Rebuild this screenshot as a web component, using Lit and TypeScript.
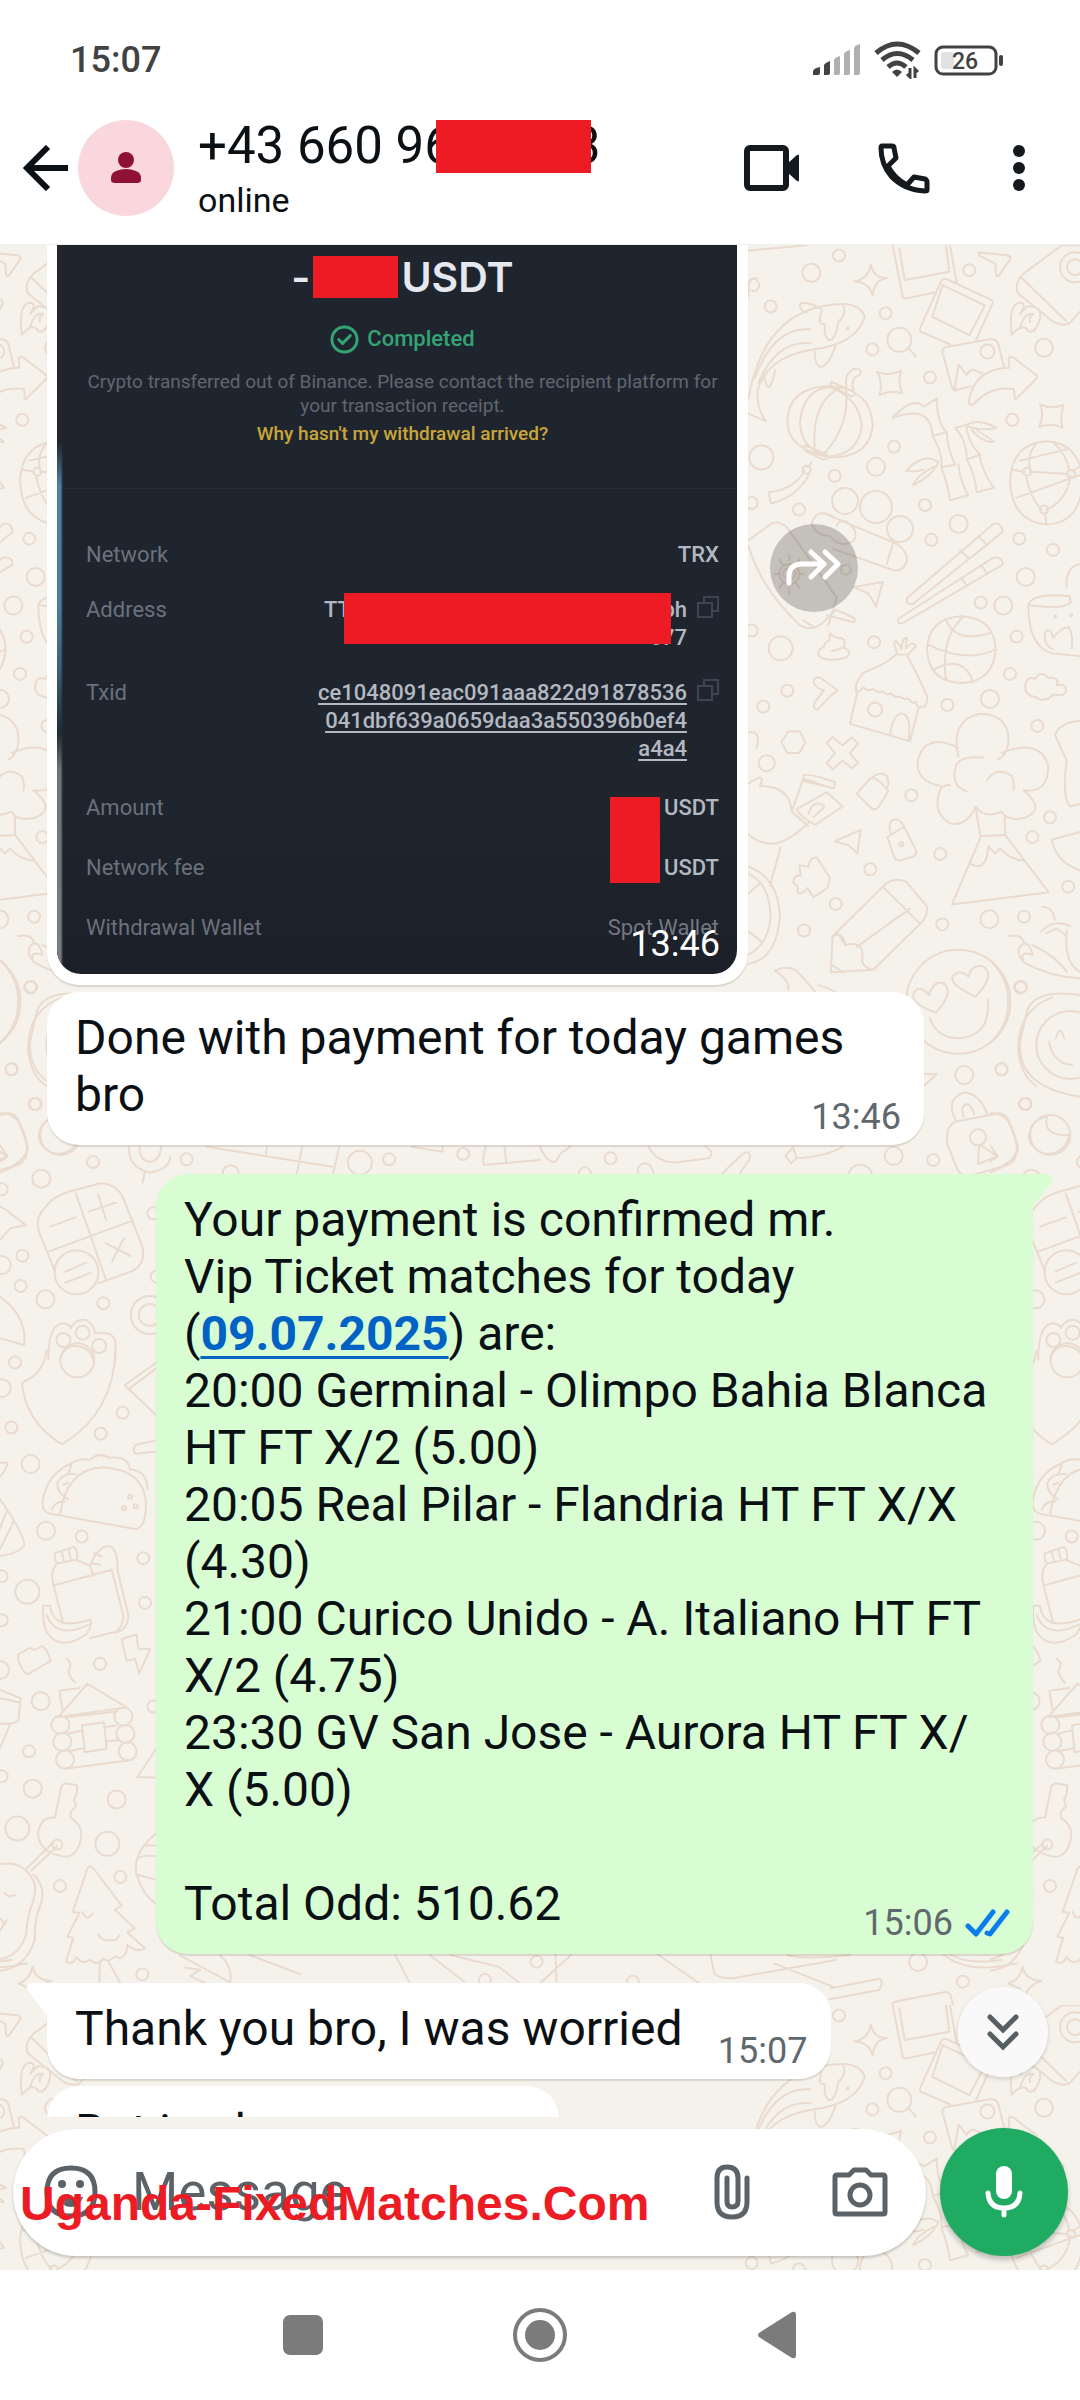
import { LitElement, html, svg, css, nothing } from "lit";
import { customElement, property } from "lit/decorators.js";

type Dot = [number, number, number];

/** One sheet of doodles: origin on the wallpaper, drawing units per pixel, outlines and bubbles. */
interface Sheet {
  x: number;
  y: number;
  kx: number;
  ky: number;
  lines: string;
  dots: Dot[];
}

const SHEETS: Sheet[] = [
  {
    x: 700, y: -15, kx: 3, ky: 1.96,
    lines: `
      M512 67Q520 95 560 94Q522 98 518 128Q508 103 464 101Q508 95 512 67Z
      M531 278Q565 288 603 276Q592 300 607 320Q570 312 538 324Q550 300 531 278Z
      M1020 342Q1055 352 1091 343Q1078 367 1088 387Q1052 378 1017 386Q1034 364 1020 342Z
      M578 30L608 130Q610 136 620 134L708 122M750 30L770 104M598 36L614 98L748 82L738 30
      M725 98Q735 94 745 98L872 136Q882 140 876 146L828 216M750 224L664 200Q656 196 662 190L725 98M728 108L855 148L808 206L697 170Z
      M735 230L870 214Q890 213 895 224L912 268M735 230Q724 234 728 242L755 306Q760 316 768 314L812 306M764 310L776 264L800 284Q810 272 822 274L850 282
      M806 338Q820 272 928 270L926 252Q930 246 940 250L1008 284Q1014 288 1008 292L950 330Q942 334 944 326L942 312Q870 305 820 342Q808 344 806 338Z
      M836 44L925 50Q934 52 930 58L896 90Q890 92 888 86L886 66L838 50Q834 46 836 44Z
      M1140 30L1085 30L970 86Q940 105 955 125L1060 180Q1090 190 1110 182L1140 160M962 92L1098 178
      M935 205Q925 150 955 143Q985 140 960 165Q985 145 990 150Q1025 150 1020 172Q1010 202 985 199Q970 180 935 205M960 190Q975 160 1000 165Q985 170 990 180
      M146 330Q190 160 400 146Q480 140 494 170Q470 225 330 235Q200 250 172 315Q170 350 198 375L146 360
      M300 145Q320 138 365 155M300 145Q298 158 320 162M430 150Q440 165 415 180Q405 220 385 215Q370 205 375 185Q350 185 365 160
      M344 238Q345 270 365 268Q390 262 408 224M330 195Q220 190 165 290M333 222Q230 215 175 300M195 290Q198 312 210 306Q220 295 225 275
      M626 232L648 248
      M262 375Q265 308 390 306Q515 312 518 384Q510 446 390 446Q262 430 262 375ZM300 375Q310 312 390 308Q480 330 485 385Q475 440 385 444Q300 430 300 375
      M425 308Q330 335 345 435M438 310Q450 385 370 440M395 298L460 316Q470 326 455 326L400 308Q388 302 395 298
      M315 422L380 440Q388 450 370 450L318 434Q308 428 315 422M440 308Q430 285 460 272Q490 272 480 284Q450 290 460 312
      M335 455L324 466M314 472Q280 510 206 514L212 536Q290 525 328 478
      M577 368Q640 325 672 346L710 330Q712 380 740 396L698 404Q695 370 662 362Q640 355 577 368ZM698 404Q730 440 724 465L766 460Q742 430 740 396
      M724 466Q745 500 750 530L804 520Q780 490 775 460M618 472Q670 435 715 455Q700 480 640 500Q650 480 710 462M618 472Q650 475 670 470
      M765 388L798 382Q805 420 840 440L800 450Q800 410 765 388ZM838 440Q850 480 882 505L830 514Q825 480 802 452
      M798 382Q840 368 888 388Q840 395 800 384M815 392Q850 418 882 415Q850 400 830 392
      M930 492Q935 418 1040 414Q1140 418 1150 492Q1140 576 1040 577Q935 572 930 492Z
      M990 474L1105 478M990 470Q980 440 1010 418M1108 472Q1100 440 1060 416M978 482Q990 525 1025 548M1112 482Q1100 530 1040 548M948 525L1150 478M960 452L1100 430M938 470L972 474M1035 555L1040 577M1120 472L1145 460
      M395 560Q350 545 335 575Q345 598 390 600Q420 625 460 610Q480 590 440 572Q420 565 410 580M370 555L590 615Q625 630 620 650Q610 670 580 667L400 625M560 655L580 612
      M146 608L215 575Q235 570 260 582L410 720L385 775M146 620Q180 700 300 775M300 775Q340 790 375 765L408 745M310 765L345 780M410 745L462 760Q470 770 455 768L380 755
      M268 636V648M268 700V712M225 674H240M296 674H312M238 646L248 656M298 646L288 656M238 702L248 692M298 702L288 692
      M620 722L880 576Q905 572 908 592L640 732Q620 736 620 722ZM595 762L880 642Q908 640 908 656L610 770Q592 774 595 762ZM780 628L808 644M835 600L862 618M785 682L800 698M845 658L862 674
      M460 700L548 690L528 738L505 712Z
      M681 822Q685 760 784 757Q882 760 887 822Q880 885 784 888Q685 885 681 822ZM740 766Q760 800 830 796Q870 792 874 788M682 812Q800 850 886 822M738 882Q720 800 790 758M820 886Q790 830 700 862
      M390 790Q400 800 425 800Q440 806 430 818Q450 822 446 834Q430 844 380 842Q350 838 356 826Q362 818 372 818Q370 808 388 805ZM395 825Q415 822 430 818
      M470 905Q460 890 490 868Q560 850 588 832L620 832Q660 880 682 915Q682 935 665 935Q650 938 648 925Q635 930 625 918Q610 922 600 914Q585 918 572 908Q560 914 548 904Q530 908 520 900Q500 905 490 896Q480 905 470 905
      M472 905L450 968L630 1002L656 936M570 990Q580 945 610 948Q635 955 626 1000M592 832L582 808Q590 800 604 822Q608 796 620 800L618 820Q635 805 648 815L622 834
      M975 895Q980 872 1005 880Q1020 862 1045 878Q1080 876 1070 892Q1100 888 1098 905Q1090 916 1060 910Q1035 928 1008 916Q975 912 975 895Z
      M265 983L300 983L316 1004L298 1025L262 1025L244 1004Z
      M380 1005L398 994L428 1010L455 994L474 1006L450 1026L475 1045L455 1055L428 1040L398 1057L380 1045L405 1026Z
      M340 885Q350 870 370 882L412 902L388 916L352 940Q336 938 344 926L372 902Q350 900 340 885Z
      M775 1032Q750 960 840 948Q930 950 925 1005Q920 1030 895 1038M905 1025Q1020 995 1045 1050Q1045 1105 970 1098Q1040 1135 975 1152Q920 1160 905 1140Q850 1155 828 1130Q800 1170 750 1163Q690 1140 725 1090Q640 1080 655 1035Q680 985 775 1015
      M730 1092Q740 1086 750 1088M800 1100Q750 1090 768 1050Q780 1030 850 1034M862 1078Q890 1050 935 1070Q945 1085 940 1098
      M826 1130L842 1190L756 1322L1046 1298L916 1186L914 1150M842 1188L916 1186M810 1242Q860 1260 865 1208L885 1222L900 1212Q930 1235 972 1236
      M470 1105L510 1075Q530 1070 565 1100L535 1132Q525 1138 515 1134ZM515 1074Q540 1060 560 1070Q572 1085 558 1095
      M562 1190L612 1170L648 1215Q650 1225 640 1228L600 1236Q585 1236 582 1228ZM572 1186Q560 1155 590 1155Q610 1160 618 1178
      M404 1198L482 1176L472 1222L446 1206Z
      M280 1280Q282 1262 302 1266L298 1245L325 1248Q330 1228 350 1230L390 1270L382 1290L340 1308L322 1290Q305 1305 292 1298Q298 1284 280 1280Z
      M392 1455L398 1384L560 1280Q590 1268 620 1278L680 1325Q686 1345 660 1360L520 1450ZM398 1384Q430 1375 436 1402Q490 1392 488 1425Q480 1445 522 1450M550 1288L658 1358M410 1375L436 1402M470 1405L630 1330M394 1440L430 1455
      M146 985Q185 980 170 1015M146 1085Q200 1060 180 1090Q270 1090 275 1140L310 1075L385 1092M310 1070Q315 1062 405 1082L402 1094L312 1080M146 1185Q220 1230 325 1162M275 1140L325 1168
      M290 1135L380 1102L428 1130L345 1166Q300 1150 290 1135M325 1145Q340 1115 370 1128Q380 1130 340 1150M242 1210L210 1285
      M146 1262Q208 1280 212 1345Q205 1400 146 1420M146 1248Q235 1270 240 1345Q230 1430 146 1438M146 1375L185 1395M146 1300L178 1282
      M225 1452Q260 1440 290 1452Q330 1480 345 1493M225 1452Q270 1470 265 1490M355 1480Q380 1484 405 1493
      M985 735Q985 820 1060 830L1140 835M985 735Q1000 710 1110 718L1112 730Q1090 745 985 735M1035 790Q1050 775 1060 800Q1080 780 1105 778Q1120 790 1115 820M1035 790Q1030 815 1060 822M1100 700Q1095 660 1140 655
      M1065 990Q1080 965 1140 962M1065 990L1100 1040Q1085 1110 1110 1130L1140 1125M1140 1180L1055 1195Q1070 1240 1140 1255
      M146 40L320 30M146 130Q140 90 170 95`,
    dots: [
      [417, 50, 6], [334, 84, 9], [212, 150, 6], [557, 163, 6], [517, 234, 6], [160, 108, 6], [598, 215, 12], [690, 289, 6], [808, 79, 6],
      [862, 238, 7], [1032, 231, 9], [937, 372, 6], [582, 425, 6], [528, 464, 9], [404, 482, 6], [184, 446, 12], [320, 470, 4], [297, 548, 6],
      [435, 531, 13], [528, 543, 16], [600, 586, 13], [675, 539, 6], [694, 607, 6], [776, 576, 9], [958, 605, 6], [1059, 627, 6], [977, 680, 9],
      [268, 674, 10], [268, 674, 6], [438, 666, 5], [910, 736, 9], [842, 730, 6], [950, 797, 6], [930, 870, 6], [870, 919, 9], [742, 931, 6],
      [522, 808, 6], [242, 820, 12], [262, 903, 6], [190, 934, 6], [155, 535, 6], [155, 785, 6], [525, 940, 7], [1012, 972, 6], [634, 1108, 6],
      [1050, 1151, 6], [997, 1190, 6], [721, 1223, 6], [511, 1253, 6], [1105, 1287, 6], [604, 1204, 2], [407, 1321, 6], [312, 1373, 6],
      [727, 1361, 6], [868, 1351, 9], [972, 1346, 6], [443, 193, 1], [200, 1045, 8], [1125, 73, 15], [1125, 73, 8], [982, 474, 4], [1113, 478, 4], [1032, 548, 4],
      [1066, 757, 1], [1114, 755, 1], [962, 1484, 6],
    ],
  },
  {
    x: 540, y: 655, kx: 2.904, ky: 3,
    lines: `
      M1150 338Q1075 310 1085 280Q1100 250 1130 285Q1140 245 1170 248Q1205 275 1150 338ZM1265 290Q1190 255 1198 230Q1215 205 1245 230Q1250 195 1285 198Q1325 225 1265 290Z
      M1133 355Q1150 415 1220 415Q1310 405 1300 298
      M1568 285Q1440 265 1415 330L1395 420Q1380 560 1568 590M1478 425Q1490 490 1545 495M1498 415Q1510 370 1522 415
      M1205 665L1330 640Q1350 640 1360 660L1388 740Q1385 775 1340 800L1240 830Q1215 825 1205 790L1182 730Q1178 680 1205 665Z
      M1208 662Q1175 600 1230 577Q1275 580 1298 640M1230 650Q1220 615 1240 612Q1255 620 1262 642M1280 735L1328 770L1272 792L1275 735
      M1472 650Q1460 710 1538 705Q1520 770 1460 760Q1400 730 1430 675Q1445 655 1472 650Z
      M1360 108Q1400 100 1405 130Q1375 150 1405 187Q1390 150 1430 165Q1425 130 1405 130M1405 187Q1480 230 1568 235M1430 135Q1500 170 1530 215M1455 95Q1490 55 1540 78M1470 100L1500 85L1525 105M1530 90Q1520 190 1568 215M1458 20Q1490 20 1495 60
      M1115 522L1152 522L1118 555M0 740Q20 790 45 785L60 760L88 740M315 740Q340 790 400 787L490 775Q510 755 480 740M712 768L735 742L745 775L730 790ZM745 775Q830 770 880 740
      M530 820L585 765Q610 745 610 775L580 820M285 820Q280 790 310 790Q325 795 330 820`,
    dots: [
      [1215, 305, 52], [1540, 435, 34], [1272, 712, 8], [1232, 525, 9], [1340, 508, 6], [1408, 612, 6], [1142, 780, 6], [1027, 768, 9], [205, 775, 6], [930, 830, 12], [1395, 262, 6], [130, 820, 6],
    ],
  },
  {
    x: 0, y: 715, kx: 2.904, ky: 3,
    lines: `
      M125 750Q150 710 200 695L290 670Q340 670 360 720L410 850Q430 910 380 935L285 970M160 935L115 820Q100 780 125 750M220 700L308 960M140 875L385 782M258 755L336 728M285 702L308 780M145 800L220 772M308 850L380 888M360 835L325 905M190 935L250 908M190 968L264 938
      M140 1200Q140 1090 185 1090Q205 1095 205 1105Q220 1075 250 1080Q275 1095 275 1120Q340 1110 335 1160L335 1200M175 1200Q185 1155 225 1158Q265 1165 270 1200
      M0 740L20 752L75 795L30 805L0 840M180 112Q80 150 82 270Q90 350 135 378M0 0Q60 60 52 140Q50 200 0 248M0 460Q50 455 70 520Q90 590 60 610L0 638M0 555L22 590L0 605M0 1010Q80 1070 70 1155L0 1135
      M375 560Q370 620 435 638Q490 630 495 590M405 560Q405 605 440 605Q465 600 468 560M420 640L414 668M600 560L965 620M878 560L862 640M985 560L968 640M775 560L772 585M1195 560L1285 575V560M1410 560Q1400 600 1405 615L1568 600M1465 560L1470 608`,
    dots: [
      [90, 80, 6], [34, 328, 6], [103, 432, 6], [120, 656, 9], [270, 606, 6], [542, 598, 6], [1045, 608, 12], [1130, 598, 6], [1345, 582, 6], [60, 978, 6], [132, 1018, 9], [300, 1030, 6],
      [65, 887, 6], [5, 688, 6], [5, 915, 9], [184, 1140, 7], [240, 1118, 7], [288, 1158, 7], [222, 937, 22], [435, 1065, 19], [435, 1065, 11], [175, 525, 20], [670, 640, 8],
      [445, 760, 6], [455, 950, 6],
    ],
  },
  {
    x: 0, y: 1105, kx: 3, ky: 2.412,
    lines: `
      M140 0Q130 60 66 78Q75 170 180 225Q187 228 195 223Q340 150 347 0M470 30L374 85L470 158M385 95L468 45M470 218L410 228Q395 235 405 250L470 245
      M150 395Q125 390 128 365Q140 300 210 275Q240 260 270 265Q295 245 330 260Q385 255 390 288Q440 290 443 335M180 398Q200 285 310 283Q440 290 438 380Q435 430 405 432L150 395M205 360Q170 345 172 320Q190 295 230 300M155 385Q165 365 195 365M215 275L205 300M190 325L205 320
      M165 490L222 475Q232 480 232 505L172 515Q160 505 165 490ZM172 515Q150 530 160 565L190 660M160 568L335 530L370 640Q370 670 345 680L270 695M232 508L270 520L280 545M270 520Q300 465 335 475Q355 490 352 530L385 640Q385 675 345 682M283 490L305 498M275 515L300 518M185 485L192 508M205 482L212 504
      M130 617L150 617Q160 680 270 650Q280 660 260 685Q180 730 140 680Q125 650 130 617ZM140 640Q170 700 268 662
      M55 735L90 718Q100 730 125 714Q140 718 152 750L85 782Q70 780 55 750ZM365 697L410 686L414 720L450 722L418 780L405 745L380 750ZM200 745Q220 755 205 775Q210 790 224 802
      M175 885L262 805L380 862ZM178 822L238 815M178 822L188 870M246 905L312 898L320 962L254 970ZM205 925L246 918M205 968L254 960M195 1010L385 990M312 910L350 905M318 945L358 940M205 885L350 872
      M0 820L62 840L55 895Q30 905 0 900M30 903L0 960M0 840L60 850M0 360Q70 440 73 470Q60 490 0 497M20 390L0 430M40 415L0 480M0 272L22 272Q20 290 0 305M470 960L412 1030L470 1032
      M195 1045L232 1050L230 1070L222 1085L228 1100L212 1115L212 1128Q245 1145 244 1170Q235 1225 190 1222Q110 1210 115 1160Q125 1125 165 1128L185 1050ZM172 1196L95 1255M160 1188L80 1250
      M0 1240Q70 1230 100 1280Q115 1300 90 1350Q80 1380 78 1410Q60 1460 0 1470M100 1265Q135 1290 125 1330Q100 1380 105 1420Q80 1490 0 1497M15 1310Q25 1322 45 1315M0 1370L15 1385M20 1375L0 1400
      M270 1245Q260 1250 258 1262L218 1355L238 1358L202 1415L220 1418L198 1475Q215 1485 230 1465Q250 1485 270 1470Q290 1488 310 1468Q325 1480 345 1462Q370 1475 380 1448L382 1435Q410 1455 435 1443L382 1405L405 1395L345 1350L365 1340L280 1250ZM248 1355Q258 1380 277 1360M295 1410Q310 1430 330 1422Q345 1430 358 1412M300 1475L298 1525M325 1475L360 1525
      M98 1487Q105 1520 155 1522Q115 1530 105 1560M98 1487Q90 1520 55 1528L90 1540M470 1165Q400 1210 408 1260Q430 1320 470 1335M415 1225Q440 1215 470 1222M408 1265L470 1278M435 1195L465 1195
      M540 1460L690 1525M555 1490L600 1495L570 1510L625 1530M660 1460Q700 1490 690 1525M750 1460L900 1505`,
    dots: [
      [45, 30, 6], [5, 92, 9], [34, 187, 6], [92, 275, 9], [368, 151, 6], [302, 202, 6], [138, 436, 9], [245, 450, 6], [430, 502, 6], [82, 583, 12], [435, 610, 6], [5, 546, 6], [5, 652, 6],
      [0, 772, 9], [300, 757, 6], [122, 847, 9], [87, 968, 6], [98, 1058, 9], [350, 1084, 9], [52, 1154, 12], [322, 1191, 12], [180, 1293, 6], [361, 1271, 6], [427, 1506, 6], [460, 860, 6],
      [5, 1028, 6], [232, 25, 17], [390, 354, 2], [372, 382, 2], [407, 377, 2], [181, 904, 9], [187, 945, 9], [195, 988, 9], [370, 884, 9], [376, 926, 9], [383, 968, 9], [172, 1193, 5],
    ],
  },
  {
    x: 540, y: 1555, kx: 2.904, ky: 3,
    lines: `
      M495 465L505 515Q510 535 560 535L860 480M680 490L850 560M720 465Q760 480 900 465M845 565L985 536Q1000 545 985 570L840 598M0 550L90 465M45 462L48 545M340 462L460 548M1170 462Q1240 525 1385 490M1190 462Q1240 495 1340 480M1030 620Q1015 608 1040 603L1180 575Q1195 580 1200 620
      M-320 465L-220 545M-260 465L-120 500L-60 548M-420 465L-380 545`,
    dots: [[1098, 486, 9], [1228, 545, 6], [270, 545, 6], [-160, 540, 6], [-10, 485, 6]],
  },
];

const sheet = (s: Sheet) => svg`
  <g transform="translate(${s.x} ${s.y}) scale(${1 / s.kx} ${1 / s.ky})">
    <path d=${s.lines}></path>
    ${s.dots.map(([x, y, r]) => svg`<ellipse cx=${x} cy=${y} rx=${r * s.kx} ry=${r * s.ky}></ellipse>`)}
  </g>`;

@customElement("chat-wallpaper")
export class ChatWallpaper extends LitElement {
  static styles = css`
    :host { display: block; background: #f5f2eb; }
    svg { display: block; width: 100%; height: 100%; }
    path, ellipse { fill: none; stroke: #e9dbcd; stroke-width: 2px; vector-effect: non-scaling-stroke; stroke-linejoin: round; stroke-linecap: round; }
  `;

  render() {
    return html`
      <svg aria-hidden="true">
        <defs>
          <pattern id="doodles" width="990" height="1760" patternUnits="userSpaceOnUse">
            <g id="sheets">${SHEETS.map(sheet)}</g>
            <use href="#sheets" x="-990"></use>
          </pattern>
        </defs>
        <rect width="100%" height="100%" fill="url(#doodles)"></rect>
      </svg>`;
  }
}

@customElement("chat-bubble")
export class ChatBubble extends LitElement {
  @property({ type: Boolean, reflect: true }) outgoing = false;
  @property({ type: Boolean, reflect: true }) tail = false;
  @property() time = "";

  static styles = css`
    :host { display: block; position: relative; box-sizing: border-box; max-width: 877px; align-self: flex-start; padding: 17px 40px 22px 28px; border-radius: 32px; background: #fff; box-shadow: 0 2px 1px rgba(60, 50, 30, 0.14); color: #0b1014; font-size: 48px; line-height: 57px; }
    :host([outgoing]) { align-self: flex-end; background: #d8fdd2; }
    :host([tail]) { border-top-left-radius: 0; }
    :host([outgoing][tail]) { border-top-left-radius: 32px; border-top-right-radius: 0; }
    .tail { position: absolute; top: 0; left: -20px; width: 22px; height: 34px; fill: #fff; }
    :host([outgoing]) .tail { left: auto; right: -20px; fill: #d8fdd2; transform: scaleX(-1); }
    .room { display: inline-block; width: 108px; }
    .meta { position: absolute; right: 23px; bottom: 7px; display: flex; align-items: center; gap: 12px; color: #5f686c; font-size: 36px; line-height: 42px; }
    :host([outgoing]) .meta { bottom: 10px; }
    .ticks { width: 45px; height: 30px; fill: none; stroke: #0a7ceb; stroke-width: 5; stroke-linecap: round; stroke-linejoin: round; }
  `;

  render() {
    return html`
      ${this.tail ? html`<svg class="tail" viewBox="0 0 22 34" aria-hidden="true"><path d="M22 0H5Q-2 1 1 8L20 32L22 34Z"></path></svg>` : nothing}
      <slot></slot><span class="room"></span>
      <span class="meta">
        ${this.time}
        ${this.outgoing ? html`<svg class="ticks" viewBox="0 0 45 30" role="img" aria-label="Read"><path d="M3 18L11 26L28 4M22 25L25 26L42 4"></path></svg>` : nothing}
      </span>`;
  }
}

const copyIcon = html`<svg class="copy" viewBox="0 0 22 22" aria-hidden="true"><path d="M7 7V1H21V15H15M1 7H15V21H1Z"></path></svg>`;

@customElement("transfer-receipt")
export class TransferReceipt extends LitElement {
  static styles = css`
    :host { display: block; position: relative; box-sizing: border-box; padding: 11px 18px 32px 29px; border-radius: 0 0 24px 24px; overflow: hidden; background: linear-gradient(#1f252f 75%, #1b2029); color: #b4b8c0; font-size: 22px; line-height: 28px; font-weight: 500; }
    .edge { position: absolute; left: 0; top: 0; bottom: 0; width: 6px; background: linear-gradient(to right, transparent 60%, #1f252f), linear-gradient(#242526 27%, #4c80a6 33%, #4c7b9b 50%, #3d6178 58%, #1f2c34 67%, #6f7277 72%, #7c7d82); }
    .amount { display: flex; align-items: center; justify-content: center; gap: 3px; height: 42px; margin-bottom: 25px; color: #e6e8f0; font-family: Inter, sans-serif; font-size: 41px; font-weight: 600; line-height: 42px; }
    .cover { background: #ed1c24; }
    .amount .cover { width: 85px; height: 42px; }
    .done { display: flex; align-items: center; justify-content: center; gap: 8px; height: 32px; margin-bottom: 15px; color: #35a473; }
    .done svg { width: 29px; height: 29px; fill: none; stroke: currentColor; stroke-width: 3; stroke-linecap: round; stroke-linejoin: round; }
    .note { margin: 0; text-align: center; color: #61666f; font-size: 19px; font-weight: 400; line-height: 24px; }
    .help { display: block; margin: 4px 0 42px; text-align: center; color: #c9a53a; font-size: 19px; line-height: 24px; text-decoration: none; }
    .rule { height: 1px; margin: 0 -18px 52px -24px; border: 0; background: #272d37; }
    dl { display: flex; flex-direction: column; gap: 27px; margin: 0; }
    .row { display: flex; justify-content: space-between; }
    .late { margin-top: 5px; }
    .late:nth-child(4) { margin-top: 4px; }
    dt { color: #6c717b; font-weight: 400; }
    dd { position: relative; display: flex; gap: 10px; margin: 0; text-align: right; }
    .dim { color: #73777f; font-weight: 400; }
    .copy { width: 22px; height: 22px; fill: none; stroke: #3f4550; stroke-width: 2; }
    .address { position: relative; width: 363px; }
    .ends { display: flex; justify-content: space-between; }
    .address .cover { position: absolute; left: 20px; right: 16px; top: -3px; height: 51px; }
    .figures { position: absolute; right: 59px; top: 3px; width: 50px; height: 86px; }
    .hash { color: inherit; text-underline-offset: 3px; }
    time { position: absolute; right: 17px; bottom: 9px; color: #fff; font-size: 36px; font-weight: 400; line-height: 42px; }
  `;

  render() {
    return html`
      <div class="edge"></div>
      <div class="amount"><span>-</span><span class="cover"></span><span>USDT</span></div>
      <div class="done">
        <svg viewBox="0 0 30 30" aria-hidden="true"><circle cx="15" cy="15" r="13"></circle><path d="M9 15L13 19L21 11"></path></svg>
        Completed
      </div>
      <p class="note">Crypto transferred out of Binance. Please contact the recipient platform for<br />your transaction receipt.</p>
      <a class="help" href="#help">Why hasn't my withdrawal arrived?</a>
      <hr class="rule" />
      <dl>
        <div class="row"><dt>Network</dt><dd>TRX</dd></div>
        <div class="row">
          <dt>Address</dt>
          <dd>
            <div class="address"><div class="ends"><span>TT</span><span>ph</span></div>677<span class="cover"></span></div>
            ${copyIcon}
          </dd>
        </div>
        <div class="row">
          <dt>Txid</dt>
          <dd>
            <a class="hash" href="#tx">ce1048091eac091aaa822d91878536<br />041dbf639a0659daa3a550396b0ef4<br />a4a4</a>
            ${copyIcon}
          </dd>
        </div>
        <div class="row late"><dt>Amount</dt><dd>USDT<span class="cover figures"></span></dd></div>
        <div class="row late"><dt>Network fee</dt><dd>USDT</dd></div>
        <div class="row late"><dt>Withdrawal Wallet</dt><dd class="dim">Spot Wallet</dd></div>
      </dl>
      <time>13:46</time>`;
  }
}

@customElement("app-root")
export class AppRoot extends LitElement {
  static styles = css`
    :host { display: flex; flex-direction: column; height: 100vh; background: #fff; color: #0b1014; font-family: Roboto, "Liberation Sans", sans-serif; }
    button { display: flex; align-items: center; justify-content: center; flex: none; padding: 0; border: 0; background: none; color: inherit; }
    svg { display: block; flex: none; }
    .status { display: flex; align-items: center; justify-content: space-between; height: 120px; padding: 0 76px 0 70px; box-sizing: border-box; color: #424242; font-size: 36px; font-weight: 500; }
    .indicators { display: flex; align-items: center; gap: 13px; }
    .bar { display: flex; align-items: center; height: 96px; padding: 0 31px 28px 12px; border-bottom: 1px solid #eef0ee; }
    .back { width: 66px; height: 96px; }
    .avatar { display: flex; align-items: center; justify-content: center; width: 96px; height: 96px; border-radius: 50%; background: #fad7dc; }
    .who { flex: 1; margin-left: 24px; }
    .name { display: flex; align-items: center; margin: 0 0 4px; font-size: 51px; font-weight: 400; line-height: 60px; }
    .name .cover { position: relative; width: 155px; height: 53px; margin: 0 -19px 0 -17px; background: #ed1c24; }
    .presence { font-size: 34px; line-height: 40px; }
    .video { width: 132px; height: 96px; }
    .call { width: 132px; height: 96px; }
    .more { width: 60px; height: 96px; margin-left: 19px; }
    .chat { position: relative; display: flex; flex: 1; flex-direction: column; min-height: 0; }
    chat-wallpaper { position: absolute; inset: 0; }
    .thread { position: relative; display: flex; flex: 1; flex-direction: column; gap: 7px; min-height: 0; padding: 0 47px; overflow: hidden; }
    .shared { display: flex; flex: none; align-items: center; gap: 22px; }
    .photo { width: 680px; padding: 0 11px 11px 10px; border-radius: 0 0 32px 32px; background: #fff; box-shadow: 0 2px 1px rgba(60, 50, 30, 0.14); }
    .forward { width: 88px; height: 88px; margin-bottom: 95px; border-radius: 50%; background: rgba(0, 0, 0, 0.2); }
    chat-bubble { flex: none; }
    .turn { margin-top: 22px; }
    .clipped { min-width: 512px; }
    .date { color: #0062c4; font-weight: 700; text-decoration-thickness: 3px; text-underline-offset: 6px; }
    .down { position: absolute; right: 32px; bottom: 40px; width: 90px; height: 90px; border-radius: 50%; background: rgba(250, 250, 250, 0.92); box-shadow: 0 2px 4px rgba(0, 0, 0, 0.15); }
    .composer { position: relative; display: flex; flex: none; align-items: center; gap: 14px; padding: 11px 12px 14px 13px; }
    .field { display: flex; flex: 1; align-items: center; height: 127px; min-width: 0; padding: 0 24px 0 31px; box-sizing: border-box; border-radius: 64px; background: #fff; box-shadow: 0 2px 3px rgba(0, 0, 0, 0.2); color: #5b6368; }
    input { flex: 1; min-width: 0; height: 80px; margin-left: 34px; padding: 0; border: 0; outline: 0; background: none; color: #0b1014; font: 400 53px/60px Roboto, "Liberation Sans", sans-serif; }
    input::placeholder { color: #5b6368; opacity: 1; }
    .attach, .camera { width: 84px; height: 84px; }
    .attach { margin-right: 44px; }
    .mic { width: 128px; height: 128px; border-radius: 50%; background: #1fab61; box-shadow: 0 4px 5px rgba(0, 0, 0, 0.22); }
    .site { position: absolute; left: 20px; top: 59px; color: #ed1c24; font-family: "Liberation Sans", sans-serif; font-size: 48px; font-weight: 700; line-height: 56px; white-space: nowrap; pointer-events: none; }
    .nav { display: flex; flex: none; align-items: center; justify-content: center; height: 130px; color: #7b7b7b; }
    .nav button { width: 237px; height: 130px; }
  `;

  private matches = [
    html`20:00 Germinal - Olimpo Bahia Blanca HT FT X/2 (5.00)`,
    html`20:05 Real Pilar - Flandria HT FT X/X (4.30)`,
    html`21:00 Curico Unido - A. Italiano HT FT X/2 (4.75)`,
    html`23:30 GV San Jose - Aurora HT FT X/<wbr />X (5.00)`,
  ];

  render() {
    return html`
      <div class="status">
        <span>15:07</span>
        <div class="indicators">
          <svg width="48" height="32" viewBox="0 0 48 32" aria-label="Signal">
            <path d="M0 31V27Q1 24 7 23V29Q7 31 5 31ZM11 31V21Q12 19 17 17V29Q17 31 15 31Z" fill="#424242"></path>
            <path d="M21 31V16Q22 13 27 12V29Q27 31 25 31ZM31 31V10Q32 7 37 6V29Q37 31 35 31ZM41 31V4Q42 1 47 0V29Q47 31 45 31Z" fill="#b0b0b0"></path>
          </svg>
          <svg width="47" height="38" viewBox="0 0 47 38" fill="none" stroke="#424242" stroke-width="5" aria-label="Wi-Fi">
            <path d="M2 12Q23 -6 45 12M8 19Q23 6 39 19M14 26Q23 18 32 26"></path>
            <path d="M18 31Q23 26 28 31L23 36Z" fill="#424242" stroke="none"></path>
            <path d="M36 27V36L33 33M41 37V28L44 31" stroke-width="3"></path>
          </svg>
          <svg width="70" height="31" viewBox="0 0 70 31" aria-label="Battery 26 percent">
            <rect x="2" y="2" width="60" height="27" rx="7" fill="none" stroke="#424242" stroke-width="3"></rect>
            <rect x="7" y="7" width="13" height="17" rx="3" fill="#e2e2e2"></rect>
            <rect x="65" y="10" width="4" height="11" rx="2" fill="#424242"></rect>
            <text x="31" y="24" fill="#424242" font-size="23" font-weight="500" text-anchor="middle">26</text>
          </svg>
        </div>
      </div>
      <header class="bar">
        <button class="back" aria-label="Back">
          <svg width="46" height="46" viewBox="0 0 46 46" fill="none" stroke="#0b1014" stroke-width="6"><path d="M46 23H5M26 2L5 23L26 44"></path></svg>
        </button>
        <div class="avatar">
          <svg width="32" height="32" viewBox="0 0 32 32" fill="#8f1236"><circle cx="16" cy="8" r="8"></circle><path d="M1 26Q1 21 6 19Q16 15 26 19Q31 21 31 26V28Q31 31 27 31H5Q1 31 1 28Z"></path></svg>
        </div>
        <div class="who">
          <h1 class="name"><span>+43 660 96</span><span class="cover"></span><span>3</span></h1>
          <div class="presence">online</div>
        </div>
        <button class="video" aria-label="Video call">
          <svg width="56" height="46" viewBox="0 0 56 46"><rect x="3" y="3" width="39" height="40" rx="3" fill="none" stroke="#14191d" stroke-width="6"></rect><path d="M43 19L53 10Q55 9 55 11V35Q55 37 53 36L43 27Z" fill="#14191d"></path></svg>
        </button>
        <button class="call" aria-label="Voice call">
          <svg width="52" height="52" viewBox="0 0 52 52" fill="none" stroke="#14191d" stroke-width="5" stroke-linejoin="round"><path d="M4 4H14Q16 4 16 6L18 16L10 24Q16 36 29 43L36 35L47 37Q49 38 49 40V48Q49 49 47 49Q26 48 13 34Q3 22 3 6Q3 4 4 4Z"></path></svg>
        </button>
        <button class="more" aria-label="More options">
          <svg width="12" height="46" viewBox="0 0 12 46" fill="#14191d"><circle cx="6" cy="6" r="6"></circle><circle cx="6" cy="23" r="6"></circle><circle cx="6" cy="40" r="6"></circle></svg>
        </button>
      </header>
      <main class="chat">
        <chat-wallpaper></chat-wallpaper>
        <div class="thread">
          <div class="shared">
            <div class="photo"><transfer-receipt></transfer-receipt></div>
            <button class="forward" aria-label="Forward">
              <svg width="56" height="40" viewBox="0 0 56 40" fill="none" stroke="#fff" stroke-width="5" stroke-linecap="round" stroke-linejoin="round"><path d="M3 35V29Q3 16 16 16H38M25 4L38 16L25 29M39 4L52 16L39 29"></path></svg>
            </button>
          </div>
          <chat-bubble time="13:46">Done with payment for today games bro</chat-bubble>
          <chat-bubble class="turn" outgoing tail time="15:06">
            Your payment is confirmed mr.<br />Vip Ticket matches for today (<a class="date" href="#date">09.07.2025</a>) are:<br />
            ${this.matches.map((line) => html`${line}<br />`)}<br />Total Odd: 510.62
          </chat-bubble>
          <chat-bubble class="turn" tail time="15:07">Thank you bro, I was worried</chat-bubble>
          <chat-bubble class="clipped" time="15:07">But is ok now</chat-bubble>
          <button class="down" aria-label="Scroll to latest">
            <svg width="34" height="38" viewBox="0 0 34 38" fill="none" stroke="#565f64" stroke-width="5" stroke-linecap="round"><path d="M4 4L17 17L30 4M4 21L17 34L30 21"></path></svg>
          </button>
        </div>
        <div class="composer">
          <div class="field">
            <svg width="54" height="54" viewBox="0 0 54 54" fill="none" stroke="currentColor" stroke-width="5" aria-hidden="true">
              <path d="M27 3Q51 3 51 27Q51 51 27 51Q3 51 3 27Q3 3 27 3Z"></path>
              <path d="M15 32H39Q36 42 27 42Q18 42 15 32Z" fill="currentColor" stroke="none"></path>
              <circle cx="18" cy="19" r="4" fill="currentColor" stroke="none"></circle><circle cx="36" cy="19" r="4" fill="currentColor" stroke="none"></circle>
            </svg>
            <input type="text" placeholder="Message" aria-label="Message" />
            <button class="attach" aria-label="Attach">
              <svg width="36" height="56" viewBox="0 0 36 56" fill="none" stroke="currentColor" stroke-width="5" stroke-linecap="round"><path d="M33 14V38Q33 53 18 53Q3 53 3 38V14Q3 3 13 3Q24 3 24 14V37Q24 43 18 43Q13 43 13 37V14"></path></svg>
            </button>
            <button class="camera" aria-label="Camera">
              <svg width="56" height="50" viewBox="0 0 56 50" fill="none" stroke="currentColor" stroke-width="5" stroke-linejoin="round"><path d="M5 8H17L22 3H34L39 8H51Q53 8 53 10V45Q53 47 51 47H5Q3 47 3 45V10Q3 8 5 8Z"></path><circle cx="28" cy="28" r="10"></circle></svg>
            </button>
          </div>
          <button class="mic" aria-label="Record voice message">
            <svg width="40" height="54" viewBox="0 0 40 54" fill="none" stroke="#fff" stroke-width="5" stroke-linecap="round"><rect x="12" y="1" width="16" height="33" rx="8" fill="#fff" stroke="none"></rect><path d="M4 28Q5 43 20 43Q35 43 36 28M20 43V50"></path></svg>
          </button>
          <div class="site">Uganda-FixedMatches.Com</div>
        </div>
      </main>
      <nav class="nav">
        <button aria-label="Recent apps"><svg width="40" height="40" viewBox="0 0 40 40" fill="currentColor"><rect width="40" height="40" rx="7"></rect></svg></button>
        <button aria-label="Home"><svg width="56" height="56" viewBox="0 0 56 56"><circle cx="28" cy="28" r="25" fill="none" stroke="currentColor" stroke-width="4"></circle><circle cx="28" cy="28" r="15" fill="currentColor"></circle></svg></button>
        <button aria-label="Back"><svg width="38" height="48" viewBox="0 0 38 48" fill="currentColor"><path d="M1 22L34 1Q38 0 38 4V44Q38 48 34 47L1 26Q-1 24 1 22Z"></path></svg></button>
      </nav>`;
  }
}
